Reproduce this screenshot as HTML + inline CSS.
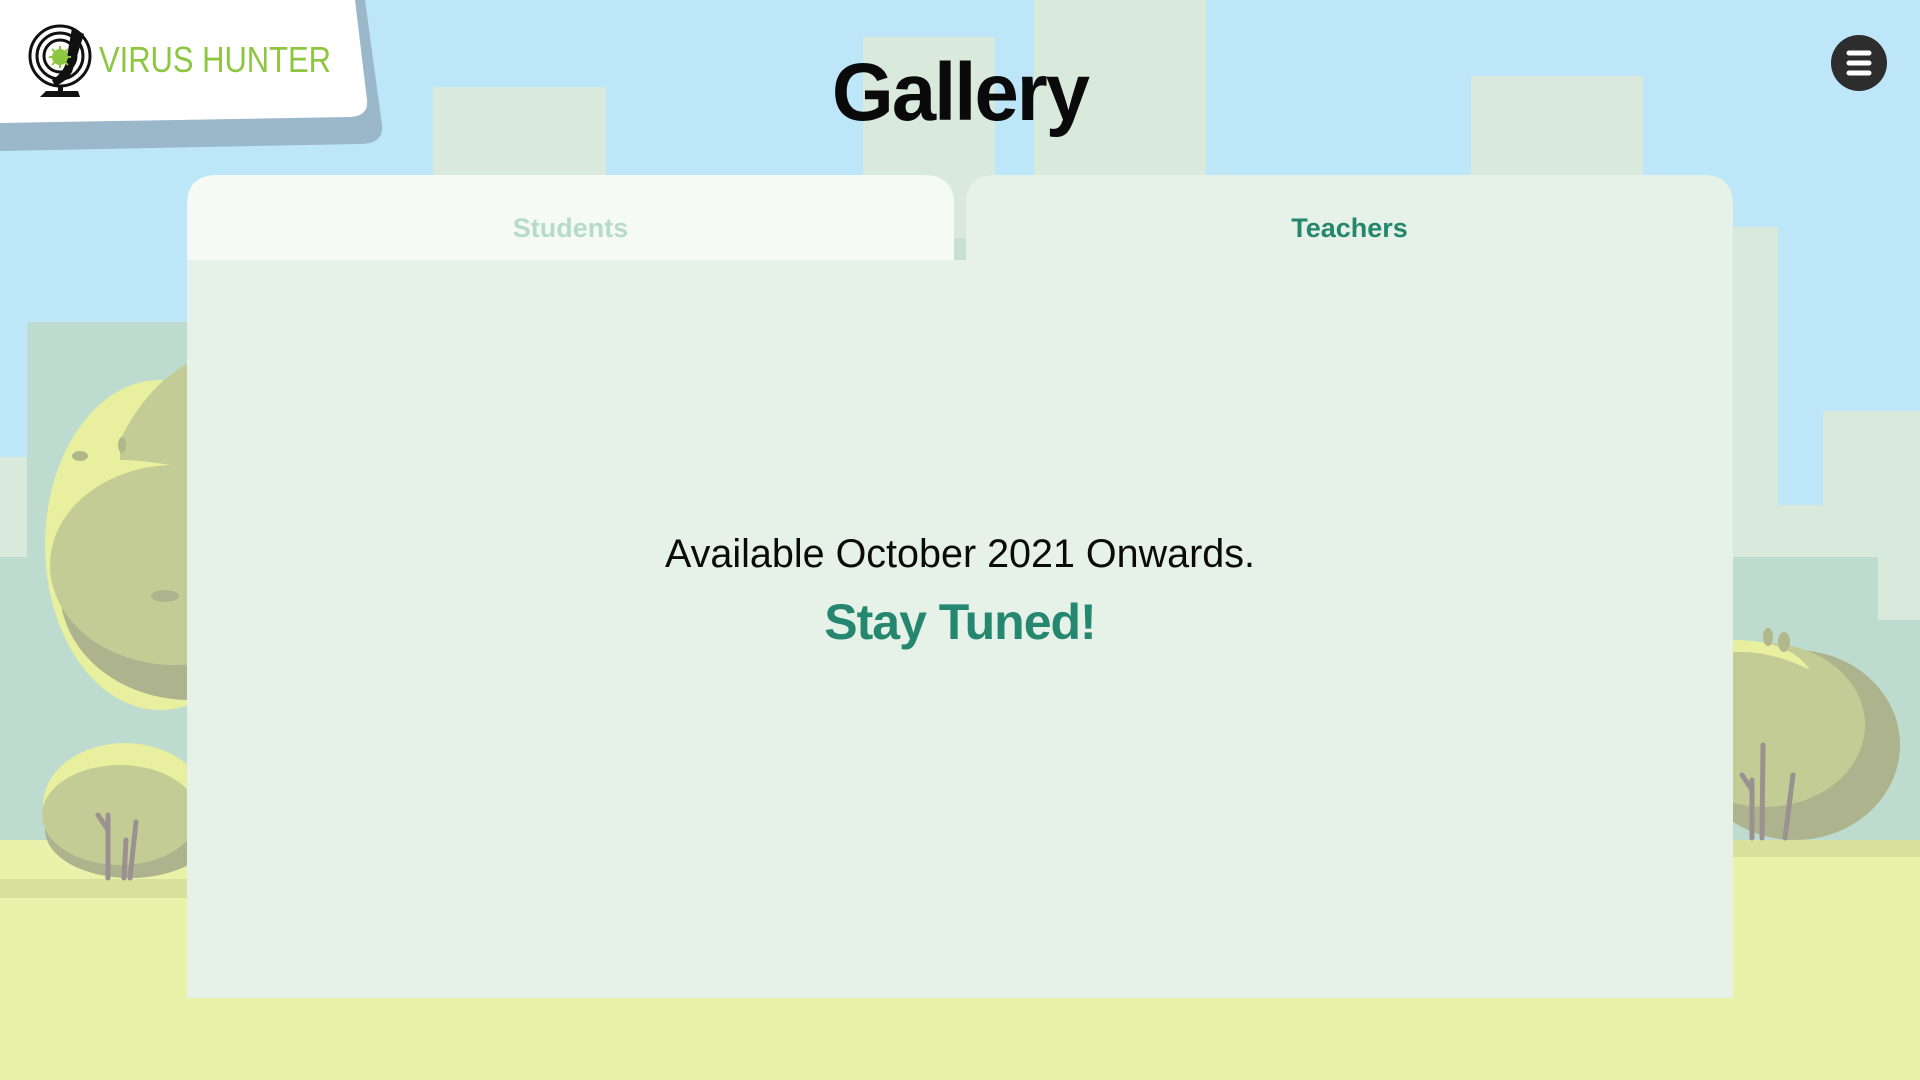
<!DOCTYPE html>
<html><head><meta charset="utf-8"><style>
html,body{margin:0;padding:0;width:1920px;height:1080px;overflow:hidden;background:#bde6f9;font-family:"Liberation Sans",sans-serif}
.abs{position:absolute}
</style></head><body>
<svg class="abs" style="left:0;top:0" width="1920" height="1080" viewBox="0 0 1920 1080">
<rect width="1920" height="1080" fill="#bde6f9"/>
<g fill="#d9eadd">
<rect x="433" y="87" width="173" height="200"/>
<rect x="863" y="37" width="132" height="250"/>
<rect x="1034" y="0" width="172" height="287"/>
<rect x="1471" y="76" width="172" height="211"/>
<rect x="1733" y="227" width="45" height="600"/>
<rect x="1823" y="411" width="97" height="500"/>
<rect x="1733" y="505" width="187" height="400"/>
<rect x="0" y="457" width="30" height="300"/>
</g>
<g fill="#bddbcf">
<rect x="27" y="322" width="160" height="550"/>
<rect x="0" y="557" width="187" height="320"/>
<rect x="1733" y="557" width="145" height="300"/>
<rect x="1878" y="620" width="42" height="240"/>
</g>
<ellipse cx="160" cy="545" rx="115" ry="165" fill="#e8ef9e"/>
<ellipse cx="190" cy="590" rx="130" ry="110" fill="#adb38c"/>
<ellipse cx="175" cy="565" rx="125" ry="100" fill="#c4cc96"/>
<path d="M120 440 Q150 380 195 360 L195 470 Q150 460 120 460 Z" fill="#c4cc96"/>
<ellipse cx="165" cy="596" rx="14" ry="6" fill="#adb38c"/>
<ellipse cx="80" cy="456" rx="8" ry="5" fill="#b0b88a"/>
<ellipse cx="122" cy="445" rx="4" ry="8" fill="#b0b88a"/>
<rect x="0" y="840" width="190" height="240" fill="#e8f3a9"/>
<rect x="0" y="879" width="190" height="19" fill="#d8e19a"/>
<rect x="1730" y="840" width="190" height="240" fill="#e8f3a9"/>
<rect x="1730" y="840" width="190" height="17" fill="#d8e19a"/>
<rect x="0" y="995" width="1920" height="85" fill="#e8f3a9"/>
<ellipse cx="125" cy="805" rx="82" ry="62" fill="#e8ef9e"/>
<ellipse cx="130" cy="830" rx="85" ry="48" fill="#adb38c"/>
<ellipse cx="120" cy="815" rx="78" ry="50" fill="#c4cc96"/>
<g stroke="#9a9291" stroke-width="5" stroke-linecap="round" fill="none">
<path d="M108 878 L108 815"/><path d="M124 878 L126 840"/><path d="M130 878 L136 822"/><path d="M108 830 L98 815"/>
</g>
<ellipse cx="1795" cy="745" rx="105" ry="95" fill="#adb38c"/>
<ellipse cx="1765" cy="725" rx="100" ry="82" fill="#c4cc96"/>
<path d="M1733 640 Q1790 640 1810 670 Q1770 650 1733 652 Z" fill="#e8ef9e"/>
<ellipse cx="1768" cy="637" rx="5" ry="9" fill="#b0b88a"/>
<ellipse cx="1784" cy="642" rx="6" ry="10" fill="#b0b88a"/>
<g stroke="#9a9291" stroke-width="5" stroke-linecap="round" fill="none">
<path d="M1752 838 L1752 780"/><path d="M1762 838 L1763 745"/><path d="M1785 838 L1793 775"/><path d="M1752 790 L1742 775"/>
</g>
<path d="M0 0 L365 0 L382 125 Q384 144 360 144 L0 151 Z" fill="#9ab8ca"/>
<path d="M0 0 L355 0 L367 100 Q369 116 350 117 L0 123 Z" fill="#ffffff"/>
<g fill="none" stroke="#111" stroke-width="3">
<circle cx="60" cy="56" r="30"/><circle cx="60" cy="56" r="23"/><circle cx="60" cy="56" r="16"/>
</g>
<path d="M72 28 L84 34 L72 72 Q66 82 55 86 L52 80 Q64 72 66 62 Z" fill="#111"/>
<rect x="58" y="86" width="5" height="6" fill="#111"/>
<path d="M46 91 L78 91 L80 97 L40 97 Z" fill="#111"/>
<circle cx="60" cy="57" r="8" fill="#8dc63f"/>
<g stroke="#8dc63f" stroke-width="2"><path d="M60 46 V68 M49 57 H71 M52 49 L68 65 M68 49 L52 65"/></g>
<text x="99" y="72" font-family="Liberation Sans Narrow, Liberation Sans, sans-serif" font-size="36" fill="#8dc63f" textLength="232" lengthAdjust="spacingAndGlyphs">VIRUS HUNTER</text>
<circle cx="1859" cy="63" r="28" fill="#2d2d2d"/>
<g stroke="#fff" stroke-width="5" stroke-linecap="round"><path d="M1849 53 H1869 M1849 63 H1869 M1849 73 H1869"/></g>
<rect x="187" y="240" width="1546" height="758" fill="#e6f1e8"/>
<path d="M966 260 L966 205 Q966 175 996 175 L1703 175 Q1733 175 1733 205 L1733 260 Z" fill="#e6f1e8"/>
<rect x="954" y="238" width="12" height="22" fill="#c6e0d2"/>
<path d="M187 260 L187 205 Q187 175 217 175 L924 175 Q954 175 954 205 L954 260 Z" fill="#f5faf5"/>
</svg>
<div class="abs" style="left:660px;top:46px;width:600px;text-align:center;font-size:82px;font-weight:bold;color:#0a0a0a;letter-spacing:-2px;transform:scaleX(0.97)">Gallery</div>
<div class="abs" style="left:187px;top:213px;width:767px;text-align:center;font-size:27px;color:#b6dbcd;font-weight:bold">Students</div>
<div class="abs" style="left:966px;top:213px;width:767px;text-align:center;font-size:27px;color:#23866d;font-weight:bold">Teachers</div>
<div class="abs" style="left:560px;top:532px;width:800px;text-align:center;font-size:39.5px;color:#0a0a0a">Available October 2021 Onwards.</div>
<div class="abs" style="left:560px;top:593px;width:800px;text-align:center;font-size:50px;color:#25876f;font-weight:bold;letter-spacing:-1px">Stay Tuned!</div>
</body></html>
